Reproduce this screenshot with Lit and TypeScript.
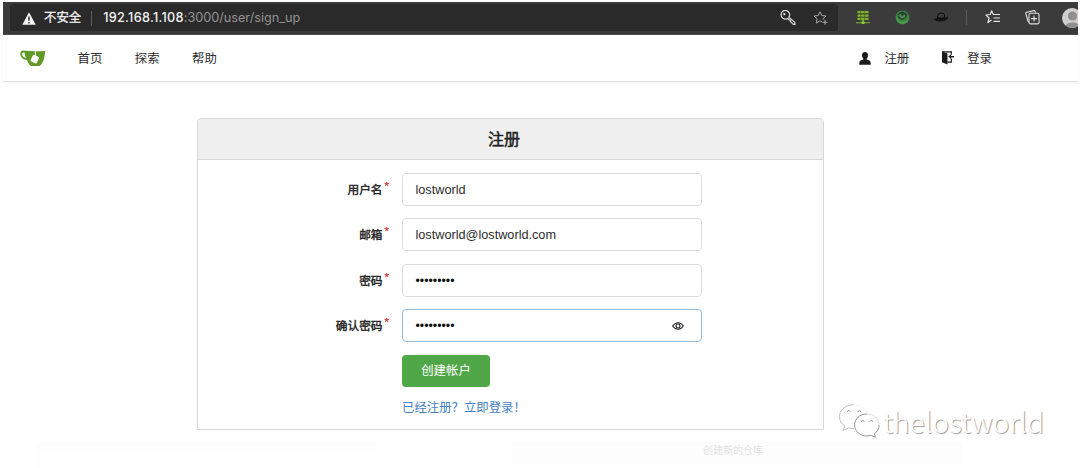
import { LitElement, html, css, svg } from 'lit';
import { customElement, property } from 'lit/decorators.js';

interface Field {
  label: string;
  value: string;
  secret?: boolean;
  focused?: boolean;
}

const FIELDS: Field[] = [
  { label: '用户名', value: 'lostworld' },
  { label: '邮箱', value: 'lostworld@lostworld.com' },
  { label: '密码', value: '•••••••••', secret: true },
  { label: '确认密码', value: '•••••••••', secret: true, focused: true },
];

@customElement('browser-bar')
export class BrowserBar extends LitElement {
  static override styles = css`
    :host {
      display: flex;
      align-items: center;
      box-sizing: border-box;
      height: 33px;
      padding-left: 7px;
      background: #3b3b3b;
      border-bottom: 1px solid #494949;
      overflow: hidden;
      font-family: Inter, 'Noto Sans CJK SC', sans-serif;
      font-size: 13px;
      color: #f2f2f2;
    }

    .address {
      display: flex;
      align-items: center;
      box-sizing: border-box;
      width: 828px;
      height: 27px;
      margin-top: -2px;
      padding: 2px 10px 0 12px;
      border-radius: 3px;
      background: #2a2a2a;
      flex: none;
    }

    svg {
      display: block;
      flex: none;
    }

    .unsafe {
      margin-left: 8px;
      font-size: 12.4px;
      line-height: 20px;
      -webkit-text-stroke: 0.3px currentColor;
    }

    .divider {
      width: 1px;
      height: 15px;
      background: #5c5c5c;
    }

    .address .divider {
      margin: 0 11px 0 10px;
    }

    .url {
      flex: 1;
      margin-top: -2px;
      color: #929292;
      font-size: 12.7px;
      letter-spacing: -0.01px;
      white-space: nowrap;
    }

    .host {
      color: #f2f2f2;
      font-weight: 500;
      letter-spacing: 0.28px;
    }

    .star {
      margin-left: 17px;
    }

    .extensions {
      display: flex;
      align-items: center;
      flex: none;
      margin: -1px 0 0 17px;
    }

    .extensions .globe {
      margin-left: 24px;
    }

    .extensions .hat {
      margin-left: 23px;
    }

    .extensions .divider {
      margin: 0 18px 0 17px;
    }

    .extensions .collections {
      margin-left: 24px;
    }

    .extensions .avatar {
      margin-left: 22px;
    }
  `;

  override render() {
    return html`
      <div class="address">
        <svg width="14" height="13" viewBox="0 0 14 13">
          <path d="M7 .2 13.7 12.8H.3Z" fill="#f4f4f4" />
          <path d="M6.3 4.6h1.4v4.2H6.3zM6.3 10h1.4v1.4H6.3z" fill="#2a2a2a" />
        </svg>
        <span class="unsafe">不安全</span>
        <span class="divider"></span>
        <span class="url"><span class="host">192.168.1.108</span>:3000/user/sign_up</span>
        <svg width="16" height="16" viewBox="0 0 16 16" fill="none" stroke="#dcdcdc" stroke-width="1.2">
          <path
            d="M8.800 7.300a4.300 4.300 0 1 0-2 1.500l1.200-.1 1 1.300h1.300v1.400l3 3h1.600v-2Z"
            stroke-linejoin="round"
          />
          <circle cx="4.3" cy="4.1" r=".6" fill="#dcdcdc" />
        </svg>
        <svg class="star" width="15" height="15" viewBox="0 0 15 15" fill="none" stroke="#a8a8a8">
          <path
            d="M9.200 11 7 9.800l-3.700 2.300.8-4.300L1 5l4.200-.5L7 .9l1.800 3.600L13 5l-3 2.800.1.800M12 8.800v5M9.500 11.300h5"
            stroke-linejoin="round"
          />
        </svg>
      </div>
      <div class="extensions">
        <svg width="16" height="15" viewBox="0 0 16 15">
          <path
            d="M2.500 1h11v2.300h-11zM2.500 4.400h11v2.300h-11zM2.500 7.800h11V10h-11zM7.300 10h1.500v2.500H7.300zM1 12.200h14v1H1z"
            fill="#7fb52b"
          />
          <path d="M5.700 0v10.500M9.700 0v10.500" stroke="#4b662a" stroke-width=".8" />
          <path d="M6.500 11.300h3v2.700h-3z" fill="#8dc63f" />
        </svg>
        <svg class="globe" width="15" height="15" viewBox="0 0 15 15">
          <circle cx="7.500" cy="7.500" r="7" fill="#3b7f42" />
          <path d="M2.500 4.500Q5 1 9 2l3.500 2.500-1.700 3.700L7 10 3.500 8Z" fill="#26432b" />
          <path d="M3 5.500 5.500 3.800 7 6.300l3-2 .3 3L7 8.500Z" fill="#4c8c52" />
          <path d="M1 5Q.5 12 7 14q6 0 7-6.500-2 4-6.500 4T1 5Z" fill="#4a9c51" />
        </svg>
        <svg class="hat" width="16" height="11" viewBox="0 0 16 11">
          <path d="M.8 7.500Q4 5.300 8 6t7-1.500Q15.500 9 8 9.500 2.500 9.700.8 7.500Z" fill="#151515" />
          <path d="M4.200 5.800 5.200 2q3-1.500 5.800-.5l1.100 4.300Q8 8 4.200 5.800Z" fill="#3a3a3a" stroke="#111" />
          <path d="M4.300 5.600q3.800 1.500 7.700 0" fill="none" stroke="#0c0c0c" stroke-width="1.400" />
        </svg>
        <span class="divider"></span>
        <svg width="16" height="15" viewBox="0 0 16 15" fill="none" stroke="#e3e3e3" stroke-width="1.2">
          <path
            d="M6.500 10 3 12.600l1-4.600L1 5l4.100-.5L6.700.9l1.700 3.600H15M8.500 8H15M8.500 11.400H15"
            stroke-linejoin="round"
          />
        </svg>
        <svg
          class="collections"
          width="15"
          height="15"
          viewBox="0 0 15 15"
          fill="none"
          stroke="#e3e3e3"
          stroke-width="1.1"
        >
          <path d="M3.500 12 2.600 10 .8 3.400Q.6 2.500 1.500 2.200L8.800.6q1-.1 1.300.8l.4 1.200" />
          <rect x="4" y="3.2" width="10" height="10.7" rx="1.5" />
          <path d="M9 5.600v6M6 8.600h6" />
        </svg>
        <svg class="avatar" width="20" height="20" viewBox="0 0 20 20">
          <clipPath id="face"><circle cx="10" cy="10" r="10" /></clipPath>
          <g clip-path="url(#face)">
            <path d="M0 0h20v20H0z" fill="#d0cecc" />
            <circle cx="10.5" cy="8" r="4.6" fill="#92908e" />
            <path d="M3 20q.5-5.500 7.500-5.500T18 20Z" fill="#92908e" />
          </g>
        </svg>
      </div>
    `;
  }
}

@customElement('site-nav')
export class SiteNav extends LitElement {
  static override styles = css`
    :host {
      display: flex;
      align-items: center;
      box-sizing: border-box;
      height: 47px;
      padding: 0 86px 0 17px;
      border-bottom: 1px solid #e2e2e2;
      box-shadow: 0 1px 2px rgba(0, 0, 0, 0.06);
      background: #fff;
      color: #2c2c2c;
      font-size: 12.4px;
      line-height: 20px;
    }

    svg {
      display: block;
      flex: none;
    }

    .links {
      display: flex;
      flex: 1;
      gap: 32.5px;
      margin-left: 31.5px;
      padding-top: 2px;
    }

    .account {
      display: flex;
      align-items: center;
    }

    .account span {
      margin-left: 13px;
      padding-top: 2px;
    }

    .account .door {
      margin-left: 32px;
    }

    .account .door + span {
      margin-left: 12px;
    }
  `;

  override render() {
    return html`
      <svg width="26" height="17" viewBox="0 0 26 17">
        <path
          d="M4 .7C1.500.2.1 2 .3 4.200c.3 3.600 3 5.400 6.700 5.800.8 2.300 2.300 4.800 4 6.100h8.300c3.300-1.800 5.600-8.300 5.800-15.100Q14 1.500 4 .7Z"
          fill="#609926"
        />
        <path d="M4.600 2.800C2.800 2.100 2 3.200 2.200 4.800 2.600 6.700 4 7.600 5.900 7.900Q4.900 5.500 4.600 2.800Z" fill="#fff" />
        <rect x="11.4" y="5.4" width="6.8" height="7.4" rx="1.4" fill="#fff" transform="rotate(26 14.8 9.1)" />
        <path d="M15.400 1v5" stroke="#fff" stroke-width="1" />
      </svg>
      <div class="links">
        <span>首页</span>
        <span>探索</span>
        <span>帮助</span>
      </div>
      <div class="account">
        <svg width="12" height="13" viewBox="0 0 12 13">
          <path
            d="M6 .1c2 0 3 1.300 3 3.100 0 1.400-.5 2.600-1.300 3.300v1l2.900 1.100Q11.800 9.200 11.800 12.800H.2Q.2 9.200 1.400 8.600l2.900-1.100v-1C3.500 5.800 3 4.600 3 3.200 3 1.400 4 .1 6 .1Z"
            fill="#1c1c1c"
          />
        </svg>
        <span>注册</span>
        <svg class="door" width="14" height="14" viewBox="0 0 14 14">
          <path d="M1 .6 6.500 2.600v11L1 11.200Z" fill="#1c1c1c" />
          <path d="M1 .9h9.300v2.800M10.300 7.500v3.600H6.500" fill="none" stroke="#1c1c1c" stroke-width="1.2" />
          <path d="M7.200 5.600 10 3.200v1.700h3v1.500h-3v1.700Z" fill="#1c1c1c" />
        </svg>
        <span>登录</span>
      </div>
    `;
  }
}

@customElement('form-field')
export class FormField extends LitElement {
  @property({ attribute: false })
  declare field: Field;

  static override styles = css`
    :host {
      display: flex;
      height: 33px;
    }

    .label {
      width: 191px;
      margin-right: 13px;
      text-align: right;
      font-size: 11.7px;
      line-height: 33px;
      color: #222;
      white-space: nowrap;
      -webkit-text-stroke: 0.4px currentColor;
    }

    .label sup {
      margin-left: 2px;
      font-size: 11.5px;
      line-height: 0;
      vertical-align: 4px;
      color: #db2828;
      -webkit-text-stroke: 0.2px currentColor;
    }

    .input {
      display: flex;
      align-items: center;
      justify-content: space-between;
      box-sizing: border-box;
      width: 300px;
      padding: 1px 17px 0 12.5px;
      border: 1px solid #dededf;
      border-radius: 4px;
      background: #fff;
      font-size: 12.7px;
      color: #2b2b2b;
    }

    .input.focused {
      border-color: #96bddd;
    }

    .secret {
      font-size: 12.4px;
      color: #111;
    }
  `;

  override render() {
    const { label, value, secret, focused } = this.field;
    return html`
      <div class="label">${label}<sup>*</sup></div>
      <div class="input ${focused ? 'focused' : ''}">
        <span class=${secret ? 'secret' : ''}>${value}</span>
        ${focused ? this.renderEye() : ''}
      </div>
    `;
  }

  private renderEye() {
    return html`
      <svg width="12" height="8" viewBox="0 0 12 8" fill="none" stroke="#222">
        ${svg`<path d="M.6 4Q3 .7 6 .7T11.4 4Q9 7.3 6 7.3T.6 4Z" stroke-width="1.1" />`}
        ${svg`<circle cx="6" cy="4" r="2" stroke-width="1.2" />`}
      </svg>
    `;
  }
}

@customElement('app-root')
export class AppRoot extends LitElement {
  static override styles = css`
    :host {
      display: block;
      position: relative;
      box-sizing: border-box;
      width: 1080px;
      height: 468px;
      padding: 2px 2px 0 3px;
      overflow: hidden;
      background: #fff;
      font-family: 'Liberation Sans', 'Noto Sans CJK SC', sans-serif;
    }

    .card {
      box-sizing: border-box;
      width: 627px;
      height: 312px;
      margin: 36px 0 0 194px;
      border: 1px solid #d8d8d9;
      border-radius: 4px 4px 0 0;
      background: #fff;
    }

    h1 {
      box-sizing: border-box;
      height: 41px;
      margin: 0;
      padding-right: 13px;
      border-bottom: 1px solid #d8d8d9;
      border-radius: 3px 3px 0 0;
      background: #efefef;
      color: #222;
      font-size: 16px;
      font-weight: 400;
      line-height: 41px;
      text-align: center;
      -webkit-text-stroke: 0.5px currentColor;
    }

    form {
      display: flex;
      flex-direction: column;
      gap: 12.5px;
      padding-top: 12.9px;
    }

    .actions {
      display: flex;
      flex-direction: column;
      align-items: flex-start;
      margin-left: 204px;
    }

    .button {
      width: 88px;
      height: 32px;
      border-radius: 4px;
      background: #50a747;
      color: #fff;
      font-size: 12.4px;
      line-height: 32px;
      text-align: center;
    }

    .link {
      margin-top: 11px;
      color: #4580c4;
      font-size: 12.4px;
      line-height: 20px;
      white-space: nowrap;
    }

    .ghost {
      display: flex;
      align-items: flex-start;
      margin: 12px 0 0 33px;
    }

    .ghost-list {
      width: 341px;
      height: 26px;
      background: #fefefe;
      border-top: 8px solid #fdfdfd;
      box-sizing: border-box;
    }

    .ghost-title {
      width: 452px;
      height: 22px;
      margin-left: 134px;
      background: #fdfdfd;
      color: #e2e2e2;
      font-size: 10px;
      line-height: 17px;
      text-align: center;
      text-indent: -8px;
    }

    .watermark {
      position: absolute;
      left: 838px;
      top: 400px;
      display: flex;
      align-items: center;
      height: 42px;
      color: #fff;
      font-family: 'Noto Sans CJK SC', sans-serif;
      font-size: 28.2px;
      font-weight: 300;
      text-shadow: 1px 1px 1px #999;
    }

    .watermark svg {
      display: block;
      margin-right: 2px;
    }

    .watermark span {
      padding-bottom: 2px;
    }
  `;

  override render() {
    return html`
      <browser-bar></browser-bar>
      <site-nav></site-nav>
      <div class="card">
        <h1>注册</h1>
        <form>
          ${FIELDS.map((field) => html`<form-field .field=${field}></form-field>`)}
          <div class="actions">
            <div class="button">创建帐户</div>
            <div class="link">已经注册？立即登录！</div>
          </div>
        </form>
      </div>
      <div class="ghost">
        <div class="ghost-list"></div>
        <div class="ghost-title">创建新的仓库</div>
      </div>
      <div class="watermark">
        <svg width="43" height="36" viewBox="0 0 43 36" fill="none" stroke="#8c8c8c" stroke-width=".9">
          <path d="M29 10.500C27.500 5 22 1.800 15.500 1.800" stroke="#f0f0f0" />
          <path
            d="M15.500 1.800C7 1.800 1.500 7.500 1.500 13.500c0 4.500 2 7.500 5.300 9.500l-1.600 4.300 5.300-2.300 5.500.5"
            stroke="#b8b8b8"
          />
          <path
            d="M29 11c-7.500 0-12.400 5-12.400 11 0 6.500 5.700 11 12.400 11l4-.7 4.500 2-1.200-3.500c3-2.200 4.800-5 4.800-8.800"
          />
          <path d="M41.100 22C41.100 16 36 11 29 11" stroke="#d8d8d8" />
          <path d="M8.800 8.800q2-2.600 3.800 0M19.500 8.800q2-2.600 3.800 0M23 18.500q1.800-2.300 3.400 0M31.500 18.500q1.800-2.300 3.400 0" />
        </svg>
        <span>thelostworld</span>
      </div>
    `;
  }
}
